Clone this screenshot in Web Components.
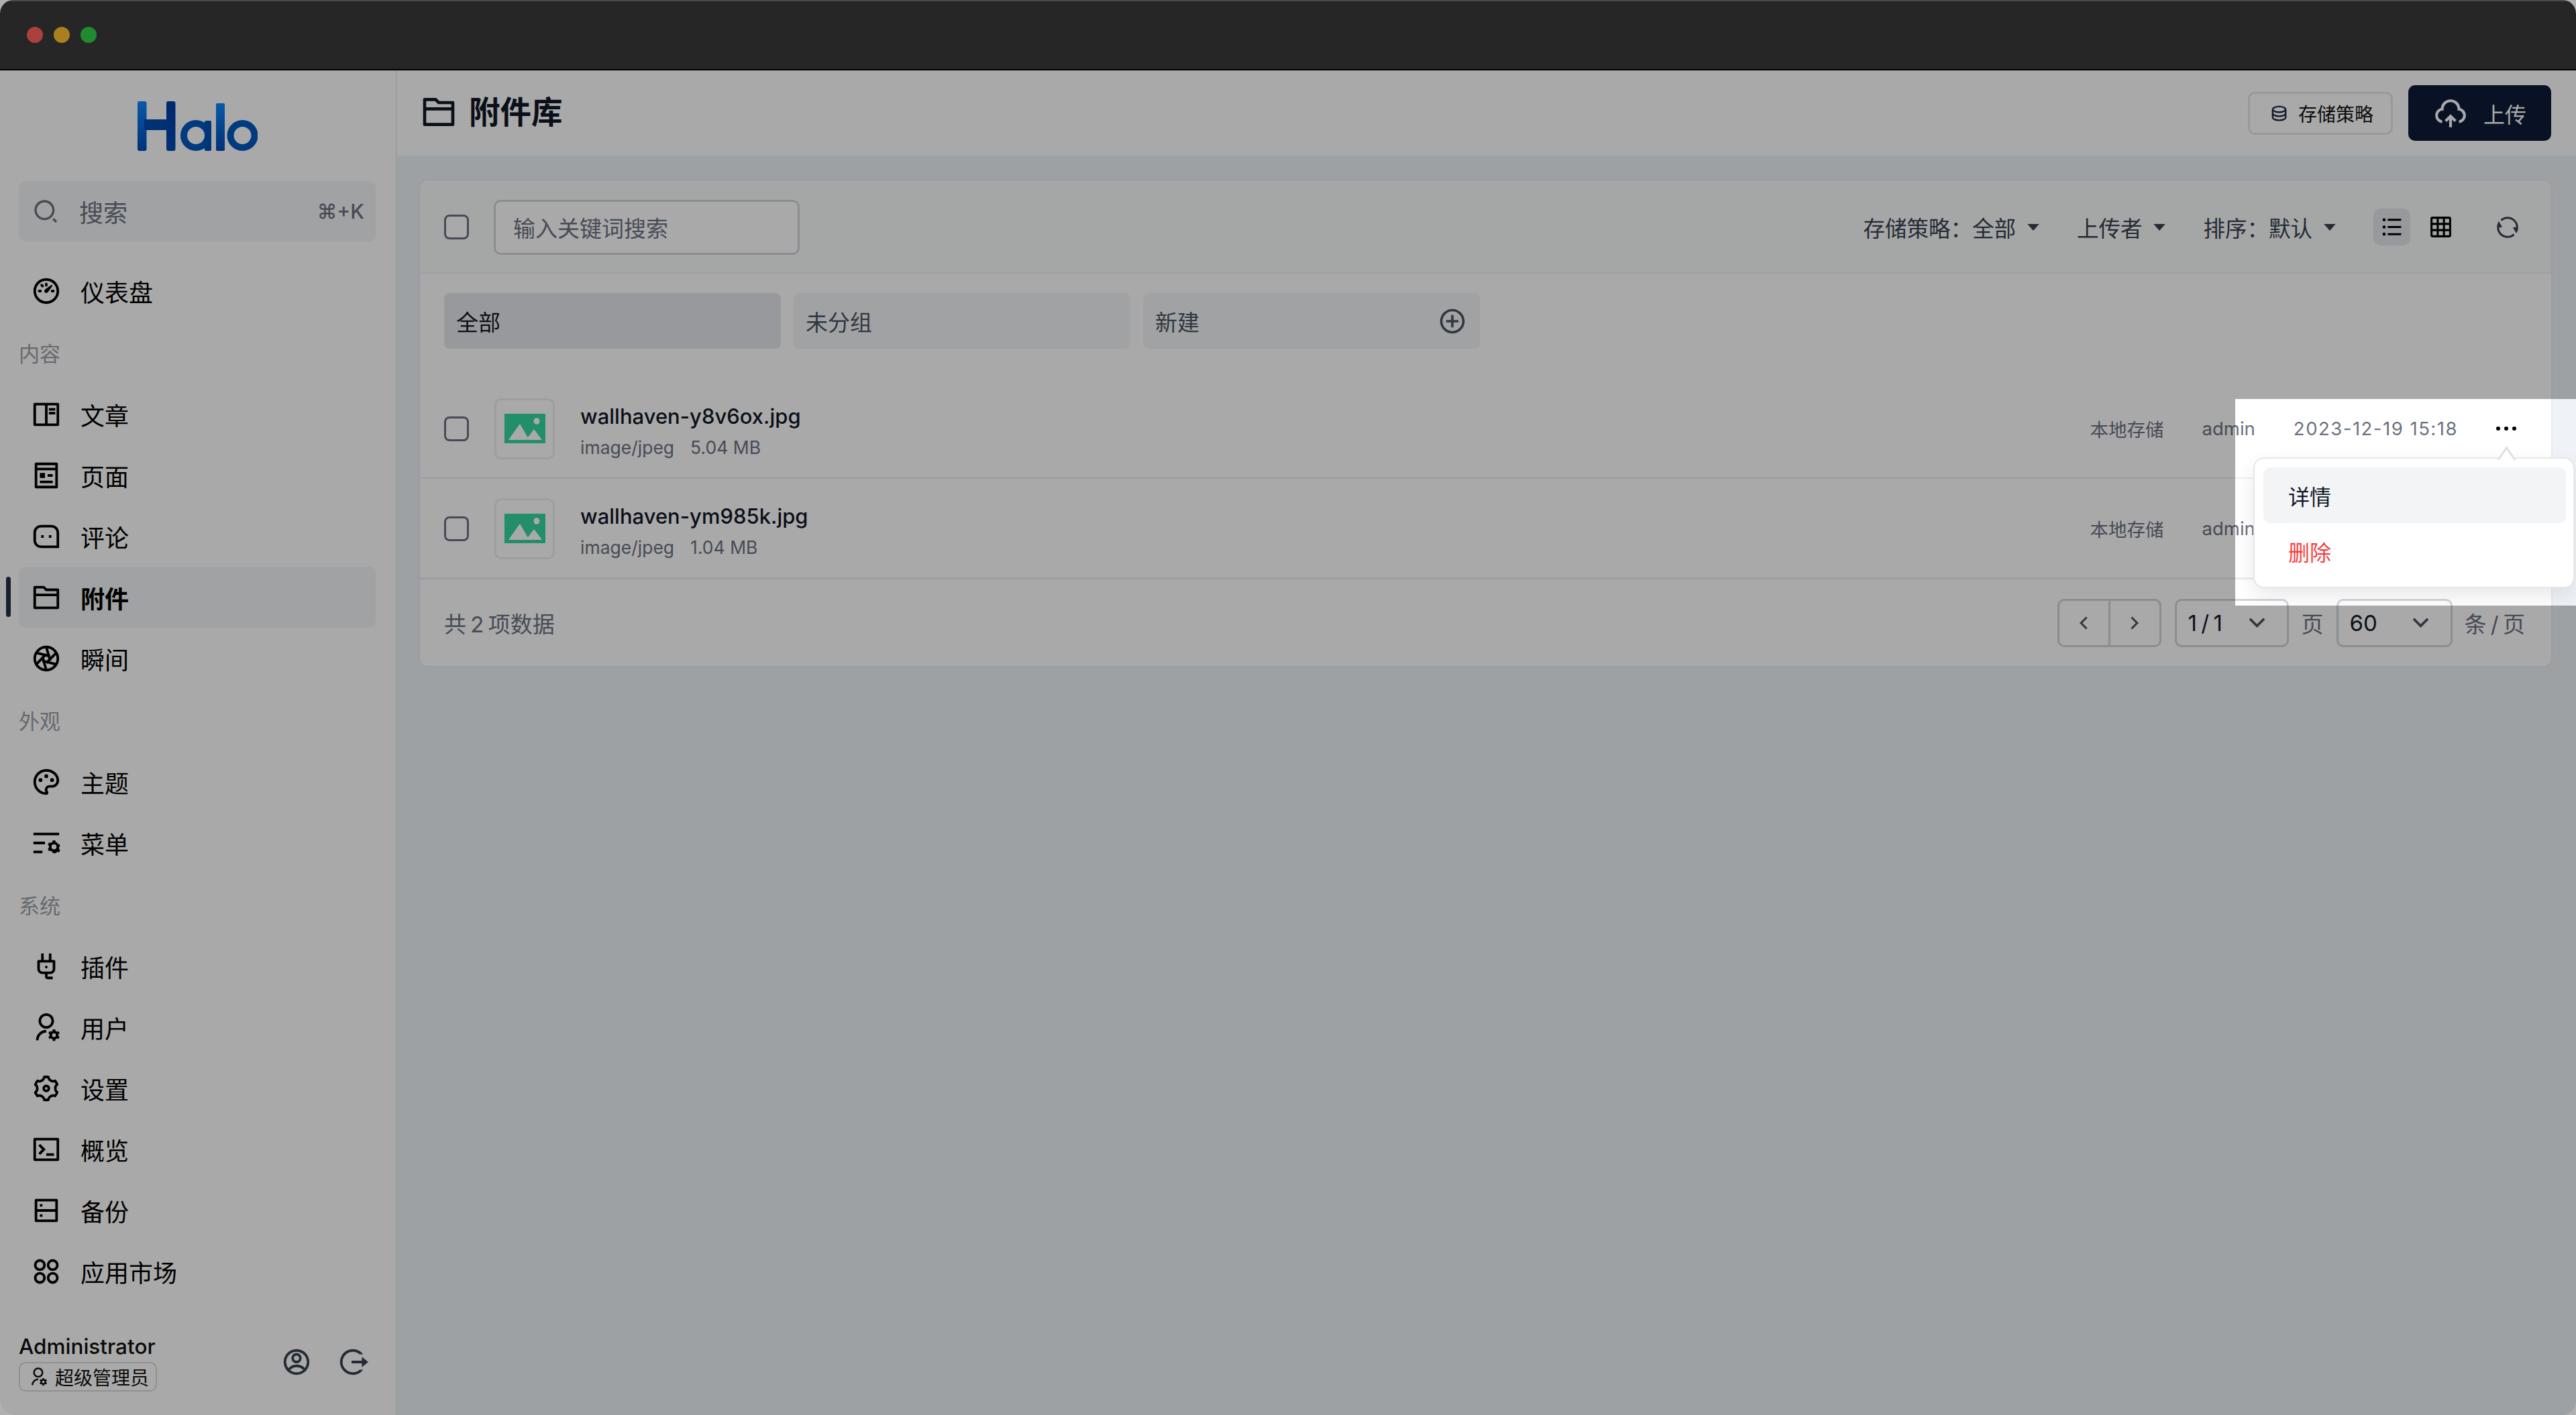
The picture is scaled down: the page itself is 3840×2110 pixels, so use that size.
<!DOCTYPE html>
<html lang="zh">
<head>
<meta charset="utf-8">
<title>附件库</title>
<style>
  html, body { margin: 0; width: 3840px; height: 2110px; overflow: hidden; background: #b0b0b0; }
  body { font-family: Inter, "Noto Sans CJK SC", sans-serif; }
</style>
</head>
<body>
<halo-app>
  <window-titlebar slot="top"></window-titlebar>
  <app-sidebar slot="side">
    <nav-item icon="dashboard">仪表盘</nav-item>
    <nav-title>内容</nav-title>
    <nav-item icon="book">文章</nav-item>
    <nav-item icon="pages">页面</nav-item>
    <nav-item icon="message">评论</nav-item>
    <nav-item icon="folder" active>附件</nav-item>
    <nav-item icon="lens">瞬间</nav-item>
    <nav-title>外观</nav-title>
    <nav-item icon="palette">主题</nav-item>
    <nav-item icon="listset">菜单</nav-item>
    <nav-title>系统</nav-title>
    <nav-item icon="plug">插件</nav-item>
    <nav-item icon="userset">用户</nav-item>
    <nav-item icon="settings">设置</nav-item>
    <nav-item icon="terminal">概览</nav-item>
    <nav-item icon="server">备份</nav-item>
    <nav-item icon="apps">应用市场</nav-item>
  </app-sidebar>
  <page-header slot="main"></page-header>
  <attachment-card slot="main">
    <card-toolbar slot="toolbar"></card-toolbar>
    <group-tabs slot="groups"></group-tabs>
    <attachment-row name="wallhaven-y8v6ox.jpg" size="5.04 MB" date="2023-12-19 15:18"></attachment-row>
    <attachment-row name="wallhaven-ym985k.jpg" size="1.04 MB" date="2023-12-19 15:18"></attachment-row>
    <card-pagination slot="footer"></card-pagination>
  </attachment-card>
  <spot-scrim slot="over"><action-menu></action-menu></spot-scrim>
</halo-app>

<script>
const ICONS = {
  dashboard: "M12 2c5.523 0 10 4.477 10 10s-4.477 10-10 10S2 17.523 2 12 6.477 2 12 2zm0 2a8 8 0 1 0 0 16 8 8 0 0 0 0-16zm3.833 3.337a.596.596 0 0 1 .763.067.59.59 0 0 1 .063.76c-2.18 3.046-3.38 4.678-3.598 4.897a1.5 1.5 0 0 1-2.122-2.122c.374-.373 2.005-1.574 4.894-3.602zM17.5 11a1 1 0 0 1 0 2h-1a1 1 0 0 1 0-2h1zm-10 0a1 1 0 0 1 0 2h-1a1 1 0 0 1 0-2h1zm2.318-3.596a1 1 0 0 1-1.414 1.414l-.707-.707a1 1 0 0 1 1.414-1.414l.707.707zM12 5.5a1 1 0 0 1 1 1v1a1 1 0 0 1-2 0v-1a1 1 0 0 1 1-1z",
  book: "M2 3.993A1 1 0 0 1 2.992 3h18.016c.548 0 .992.445.992.993v16.014a1 1 0 0 1-.992.993H2.992A.993.993 0 0 1 2 20.007V3.993zM11 5H4v14h7V5zm2 0v14h7V5h-7zm1 2h5v2h-5V7zm0 3h5v2h-5v-2z",
  pages: "M5 8v12h14V8H5zm0-2h14V4H5v2zm15 16H4a1 1 0 0 1-1-1V3a1 1 0 0 1 1-1h16a1 1 0 0 1 1 1v18a1 1 0 0 1-1 1zM7 10h4v4H7v-4zm0 6h10v2H7v-2zm6-5h4v2h-4v-2z",
  message: "M2 8.994A5.99 5.99 0 0 1 8 3h8c3.313 0 6 2.695 6 5.994V21H8c-3.313 0-6-2.695-6-5.994V8.994zM20 19V8.994A4.004 4.004 0 0 0 16 5H8a3.99 3.99 0 0 0-4 3.994v6.012A4.004 4.004 0 0 0 8 19h12zm-6-8h2v2h-2v-2zm-6 0h2v2H8v-2z",
  folder: "M12.414 5H21a1 1 0 0 1 1 1v14a1 1 0 0 1-1 1H3a1 1 0 0 1-1-1V4a1 1 0 0 1 1-1h7.414l2 2zM20 11H4v8h16v-8zm0-2V7h-8.414l-2-2H4v4h16z",
  palette: "M12 2c5.522 0 10 3.978 10 8.889a5.558 5.558 0 0 1-5.556 5.555h-1.966c-.922 0-1.667.745-1.667 1.667 0 .422.167.811.422 1.1.267.3.434.689.434 1.122C13.667 21.256 12.9 22 12 22 6.478 22 2 17.522 2 12S6.478 2 12 2zm-1.189 16.111a3.664 3.664 0 0 1 3.667-3.667h1.966A3.558 3.558 0 0 0 20 10.89C20 7.139 16.468 4 12 4a8 8 0 0 0-.676 15.972 3.648 3.648 0 0 1-.513-1.86zM7.5 12a1.5 1.5 0 1 1 0-3 1.5 1.5 0 0 1 0 3zm9 0a1.5 1.5 0 1 1 0-3 1.5 1.5 0 0 1 0 3zM12 9a1.5 1.5 0 1 1 0-3 1.5 1.5 0 0 1 0 3z",
  listset: "M2 18h7v2H2v-2zm0-7h9v2H2v-2zm0-7h20v2H2V4zm18.674 9.025l1.156-.391 1 1.732-.916.805a4.017 4.017 0 0 1 0 1.658l.916.805-1 1.732-1.156-.391c-.41.37-.898.655-1.435.83L19 20h-2l-.24-1.196a3.996 3.996 0 0 1-1.434-.83l-1.156.392-1-1.732.916-.805a4.017 4.017 0 0 1 0-1.658l-.916-.805 1-1.732 1.156.391c.41-.37.898-.655 1.435-.83L17 10h2l.24 1.196c.536.174 1.024.46 1.434.83zM18 17a2 2 0 1 0 0-4 2 2 0 0 0 0 4z",
  plug: "M13 18v2h4v2h-4a2 2 0 0 1-2-2v-2H9a4 4 0 0 1-4-4V8a1 1 0 0 1 1-1h2V2h2v5h4V2h2v5h2a1 1 0 0 1 1 1v6a4 4 0 0 1-4 4h-2zm-4-2h6a2 2 0 0 0 2-2v-3H7v3a2 2 0 0 0 2 2zm8-7V9H7v2h10zm-5 4.5a1 1 0 1 1 0-2 1 1 0 0 1 0 2z",
  userset: "M12 14v2a6 6 0 0 0-6 6H4a8 8 0 0 1 8-8zm0-1c-3.315 0-6-2.685-6-6s2.685-6 6-6 6 2.685 6 6-2.685 6-6 6zm0-2c2.21 0 4-1.79 4-4s-1.79-4-4-4-4 1.79-4 4 1.79 4 4 4zm2.595 7.812a3.51 3.51 0 0 1 0-1.623l-.992-.573 1-1.732.992.573A3.496 3.496 0 0 1 17 14.645V13.5h2v1.145c.532.158 1.012.44 1.405.812l.992-.573 1 1.732-.992.573a3.51 3.51 0 0 1 0 1.622l.992.573-1 1.732-.992-.573a3.496 3.496 0 0 1-1.405.812V22.5h-2v-1.145a3.496 3.496 0 0 1-1.405-.812l-.992.573-1-1.732.992-.572zM18 19.5a1.5 1.5 0 1 0 0-3 1.5 1.5 0 0 0 0 3z",
  settings: "M3.34 17a10.018 10.018 0 0 1-.978-2.326 3 3 0 0 0 .002-5.347A9.99 9.99 0 0 1 4.865 4.99a3 3 0 0 0 4.631-2.674 9.99 9.99 0 0 1 5.007.002 3 3 0 0 0 4.632 2.672c.579.59 1.093 1.261 1.525 2.01.433.749.757 1.53.978 2.326a3 3 0 0 0-.002 5.347 9.99 9.99 0 0 1-2.501 4.337 3 3 0 0 0-4.631 2.674 9.99 9.99 0 0 1-5.007-.002 3 3 0 0 0-4.632-2.672A10.018 10.018 0 0 1 3.34 17zm5.66.196a4.993 4.993 0 0 1 2.25 2.77c.499.047 1 .048 1.499.001A4.993 4.993 0 0 1 15 17.197a4.993 4.993 0 0 1 3.525-.565c.29-.408.54-.843.748-1.298A4.993 4.993 0 0 1 18 12c0-1.26.47-2.437 1.273-3.334a8.126 8.126 0 0 0-.75-1.298A4.993 4.993 0 0 1 15 6.804a4.993 4.993 0 0 1-2.25-2.77c-.499-.047-1-.048-1.499-.001A4.993 4.993 0 0 1 9 6.803a4.993 4.993 0 0 1-3.525.565 7.99 7.99 0 0 0-.748 1.298A4.993 4.993 0 0 1 6 12c0 1.26-.47 2.437-1.273 3.334a8.126 8.126 0 0 0 .75 1.298A4.993 4.993 0 0 1 9 17.196zM12 15a3 3 0 1 1 0-6 3 3 0 0 1 0 6zm0-2a1 1 0 1 0 0-2 1 1 0 0 0 0 2z",
  terminal: "M3 3h18a1 1 0 0 1 1 1v16a1 1 0 0 1-1 1H3a1 1 0 0 1-1-1V4a1 1 0 0 1 1-1zm1 2v14h16V5H4zm8 10h6v2h-6v-2zm-3.333-3L5.838 9.172l1.415-1.415L11.495 12l-4.242 4.243-1.415-1.415L8.667 12z",
  server: "M5 11h14V5H5v6zm16-7v16a1 1 0 0 1-1 1H4a1 1 0 0 1-1-1V4a1 1 0 0 1 1-1h16a1 1 0 0 1 1 1zm-2 9H5v6h14v-6zM7 15h2v2H7v-2zm0-8h2v2H7V7z",
  search: "M11 2c4.968 0 9 4.032 9 9s-4.032 9-9 9-9-4.032-9-9 4.032-9 9-9zm0 16c3.867 0 7-3.133 7-7 0-3.868-3.133-7-7-7-3.868 0-7 3.132-7 7 0 3.867 3.132 7 7 7zm8.485.071l2.829 2.828-1.415 1.415-2.828-2.829 1.414-1.414z",
  add: "M11 11V7h2v4h4v2h-4v4h-2v-4H7v-2h4zm1 11C6.477 22 2 17.523 2 12S6.477 2 12 2s10 4.477 10 10-4.477 10-10 10zm0-2a8 8 0 1 0 0-16 8 8 0 0 0 0 16z",
  account: "M12 22C6.477 22 2 17.523 2 12S6.477 2 12 2s10 4.477 10 10-4.477 10-10 10zm-4.987-3.744A7.966 7.966 0 0 0 12 20c1.97 0 3.773-.712 5.167-1.892A6.979 6.979 0 0 0 12.16 16a6.981 6.981 0 0 0-5.147 2.256zM5.616 16.82A8.975 8.975 0 0 1 12.16 14a8.972 8.972 0 0 1 6.362 2.634 8 8 0 1 0-12.906.187zM12 13a4 4 0 1 1 0-8 4 4 0 0 1 0 8zm0-2a2 2 0 1 0 0-4 2 2 0 0 0 0 4z",
  logout: "M12 22C6.477 22 2 17.523 2 12S6.477 2 12 2c3.27 0 6.175 1.57 8 4h-2.709a8 8 0 1 0 .001 12h2.71A9.985 9.985 0 0 1 12 22zm7-6v-3h-8v-2h8V8l5 4-5 4z",
  database: "M5 12.5c0 .313.461.858 1.53 1.393C7.914 14.585 9.877 15 12 15c2.123 0 4.086-.415 5.47-1.107 1.069-.535 1.53-1.08 1.53-1.393v-2.171C17.35 11.349 14.827 12 12 12s-5.35-.652-7-1.671V12.5zm14 2.829C17.35 16.349 14.827 17 12 17s-5.35-.652-7-1.671V17.5c0 .313.461.858 1.53 1.393C7.914 19.585 9.877 20 12 20c2.123 0 4.086-.415 5.47-1.107 1.069-.535 1.53-1.08 1.53-1.393v-2.171zM3 17.5v-10C3 5.015 7.03 3 12 3s9 2.015 9 4.5v10c0 2.485-4.03 4.5-9 4.5s-9-2.015-9-4.5zm9-7.5c2.123 0 4.086-.415 5.47-1.107C18.539 8.358 19 7.813 19 7.5c0-.313-.461-.858-1.53-1.393C16.086 5.415 14.123 5 12 5c-2.123 0-4.086.415-5.47 1.107C5.461 6.642 5 7.187 5 7.5c0 .313.461.858 1.53 1.393C7.914 9.585 9.877 10 12 10z",
  upload: "M12 12.586l4.243 4.242-1.415 1.415L13 16.415V22h-2v-5.587l-1.828 1.83-1.415-1.415L12 12.586zM12 2a7.001 7.001 0 0 1 6.954 6.194A5.5 5.5 0 0 1 18 18.978v-2.014a3.5 3.5 0 1 0-1.112-6.91 5 5 0 1 0-9.777 0 3.5 3.5 0 0 0-1.292 6.88l.181.03v2.014a5.5 5.5 0 0 1-.954-10.784A7 7 0 0 1 12 2z",
  list: "M8 4h13v2H8V4zM4.5 6.5a1.5 1.5 0 1 1 0-3 1.5 1.5 0 0 1 0 3zm0 7a1.5 1.5 0 1 1 0-3 1.5 1.5 0 0 1 0 3zm0 6.9a1.5 1.5 0 1 1 0-3 1.5 1.5 0 0 1 0 3zM8 11h13v2H8v-2zm0 7h13v2H8v-2z",
  refresh: "M5.463 4.433A9.961 9.961 0 0 1 12 2c5.523 0 10 4.477 10 10 0 2.136-.67 4.116-1.81 5.74L17 12h3A8 8 0 0 0 6.46 6.228l-.997-1.795zm13.074 15.134A9.961 9.961 0 0 1 12 22C6.477 22 2 17.523 2 12c0-2.136.67-4.116 1.81-5.74L7 12H4a8 8 0 0 0 13.54 5.772l.997 1.795z",
  left: "M10.828 12l4.95 4.95-1.414 1.414L8 12l6.364-6.364 1.414 1.414z",
  right: "M13.172 12l-4.95-4.95 1.414-1.414L16 12l-6.364 6.364-1.414-1.414z",
  down: "M12 13.172l4.95-4.95 1.414 1.414L12 16 5.636 9.636 7.05 8.222z",
  caret: "M12 16L5 8h14z"
};

// icons that read better as strokes
const STROKED = {
  lens: `<circle cx="12" cy="12" r="9" /><path d="M12 3l3.03 10.75M19.79 7.5L12 15.5M19.79 16.5L8.97 13.75M12 21L8.97 10.25M4.21 16.5L12 8.5M4.21 7.5l10.82 2.75" />`,
  apps: `<circle cx="7" cy="7" r="3.6"/><circle cx="17" cy="7" r="3.6"/><circle cx="7" cy="17" r="3.6"/><circle cx="17" cy="17" r="3.6"/>`,
  table: `<rect x="3" y="3" width="18" height="18" rx="1"/><path d="M9 3v18M15 3v18M3 9h18M3 15h18"/>`
};

class AppIcon extends HTMLElement {
  connectedCallback() {
    const name = this.getAttribute("name");
    const size = this.getAttribute("size") || 46;
    const body = STROKED[name]
      ? `<g fill="none" stroke="currentColor" stroke-width="2">${STROKED[name]}</g>`
      : `<path fill="currentColor" d="${ICONS[name]}" />`;
    this.attachShadow({ mode: "open" }).innerHTML = `
      <style>:host { display: inline-flex; flex: none; } svg { display: block; }</style>
      <svg width="${size}" height="${size}" viewBox="0 0 24 24">${body}</svg>`;
  }
}

class HaloApp extends HTMLElement {
  constructor() {
    super();
    this.attachShadow({ mode: "open" }).innerHTML = `
      <style>
        :host { display: flex; flex-direction: column; position: relative; width: 3840px; height: 2110px;
                border-radius: 20px; overflow: hidden; background: #eff3f7; color: #000; }
        .body { flex: 1; display: flex; min-height: 0; }
        .main { flex: 1; display: flex; flex-direction: column; min-width: 0; }
      </style>
      <slot name="top"></slot>
      <div class="body">
        <slot name="side"></slot>
        <div class="main"><slot name="main"></slot></div>
      </div>
      <slot name="over"></slot>`;
  }
}

class WindowTitlebar extends HTMLElement {
  constructor() {
    super();
    this.attachShadow({ mode: "open" }).innerHTML = `
      <style>
        :host { display: flex; align-items: center; gap: 16px; height: 105px; box-sizing: border-box; padding: 0 0 2px 40px;
                background: #262626; border-top: 2px solid #4a4a4a; border-bottom: 2px solid #000; }
        i { width: 24px; height: 24px; border-radius: 50%; }
      </style>
      <i style="background:#ab413d"></i><i style="background:#ab7f20"></i><i style="background:#1f8a30"></i>`;
  }
}

class AppSidebar extends HTMLElement {
  constructor() {
    super();
    this.attachShadow({ mode: "open" }).innerHTML = `
      <style>
        :host { display: flex; flex-direction: column; flex: none; width: 592px; box-sizing: border-box;
                padding: 0 29px 35px 28px; background: #fff; border-right: 3px solid #f0f1f3; font-size: 36px; }
        .logo { height: 165px; flex: none; display: flex; align-items: center; justify-content: center; }
        .search { height: 90px; flex: none; display: flex; align-items: center; box-sizing: border-box; padding: 0 17px 0 20px;
                  background: #f3f4f6; border-radius: 10px; color: #6b7280; margin-bottom: 28px; }
        .search span { margin-left: 30px; flex: 1; }
        .search kbd { font: 500 30px Inter, sans-serif; color: #6b7280; }
        .user { margin-top: auto; display: flex; align-items: center; }
        .who { flex: 1; display: flex; flex-direction: column; align-items: flex-start; gap: 1px; }
        .name { font-size: 31.5px; font-weight: 500; line-height: 44px; color: #111; }
        .badge { display: flex; align-items: center; gap: 10px; height: 44px; box-sizing: border-box; padding: 0 10px 0 12px;
                 border: 2px solid #d8d9dc; border-radius: 10px; font-size: 28px; color: #111; }
        .ops { display: flex; gap: 38px; color: #374151; margin-right: 11px; }
      </style>
      <div class="logo">
        <svg width="179" height="74" viewBox="0 0 179 74" role="img" aria-label="Halo">
          <defs><linearGradient id="g" x1="0" y1="0" x2="0" y2="1"><stop offset="0" stop-color="#0f88ff"/><stop offset="1" stop-color="#004bb5"/></linearGradient>
          <linearGradient id="h" x1="0" y1="0" x2="0" y2="1"><stop offset="0" stop-color="#003ca8"/><stop offset="1" stop-color="#004bb5"/></linearGradient>
          <linearGradient id="r" gradientUnits="userSpaceOnUse" x1="0" y1="0" x2="0" y2="74"><stop offset="0" stop-color="#0f88ff"/><stop offset="1" stop-color="#004bb5"/></linearGradient></defs>
          <rect x="0" y="0" width="13.5" height="74" rx="3" fill="url(#g)"/>
          <rect x="43" y="0" width="13.5" height="74" rx="3" fill="url(#h)"/>
          <rect x="10" y="27" width="36" height="16" fill="#004aae"/>
          <circle cx="87" cy="51" r="18" fill="none" stroke="#0058c0" stroke-width="10"/>
          <rect x="100" y="29" width="10" height="45" rx="2" fill="#0050b5"/>
          <rect x="117" y="3" width="13" height="71" rx="2" fill="url(#r)"/>
          <circle cx="156.5" cy="51" r="18" fill="none" stroke="#0058c0" stroke-width="10"/>
        </svg>
      </div>
      <div class="search"><app-icon name="search" size="40"></app-icon><span>搜索</span><kbd>⌘+K</kbd></div>
      <slot></slot>
      <div class="user">
        <div class="who">
          <div class="name">Administrator</div>
          <div class="badge"><app-icon name="userset" size="30"></app-icon>超级管理员</div>
        </div>
        <div class="ops"><app-icon name="account" size="46"></app-icon><app-icon name="logout" size="46"></app-icon></div>
      </div>`;
  }
}

class NavTitle extends HTMLElement {
  constructor() {
    super();
    this.attachShadow({ mode: "open" }).innerHTML = `
      <style>:host { display: flex; align-items: center; height: 93px; font-size: 31px; color: #9c9fa6; }</style><slot></slot>`;
  }
}

class NavItem extends HTMLElement {
  connectedCallback() {
    this.attachShadow({ mode: "open" }).innerHTML = `
      <style>
        :host { display: flex; align-items: center; gap: 28px; position: relative; height: 91px; padding-left: 18px;
                font-size: 36px; color: #000; border-radius: 10px; }
        :host([active]) { background: #f3f4f6; font-weight: 600; }
        :host([active])::before { content: ""; position: absolute; left: -19px; top: 15px; width: 7px; height: 60px;
                background: #243147; border-radius: 4px; }
      </style>
      <app-icon name="${this.getAttribute("icon")}"></app-icon><slot></slot>`;
  }
}

class PageHeader extends HTMLElement {
  constructor() {
    super();
    this.attachShadow({ mode: "open" }).innerHTML = `
      <style>
        :host { display: flex; align-items: center; flex: none; height: 127px; box-sizing: border-box; padding: 0 37px 0 34px;
                background: #fff; color: #111827; }
        h1 { margin: 0 0 3px 17px; font-size: 46.5px; font-weight: 700; line-height: 1; }
        .folder { margin-bottom: 3px; }
        .acts { margin-left: auto; display: flex; align-items: center; gap: 23px; }
        .plain { display: flex; align-items: center; gap: 14px; height: 64px; width: 216px; box-sizing: border-box; padding-left: 29px;
                 border: 3px solid #e5e7eb; border-radius: 10px; font-size: 28px; color: #111; }
        .main { display: flex; align-items: center; gap: 24px; height: 83px; width: 213px; box-sizing: border-box; padding-left: 38px;
                background: #0f1a39; border-radius: 10px; font-size: 32px; color: #fff; }
      </style>
      <app-icon class="folder" name="folder" size="56"></app-icon><h1>附件库</h1>
      <div class="acts">
        <div class="plain"><app-icon name="database" size="29" style="color:#1f2a44"></app-icon>存储策略</div>
        <div class="main"><app-icon name="upload" size="50"></app-icon>上传</div>
      </div>`;
  }
}

class AttachmentCard extends HTMLElement {
  constructor() {
    super();
    this.attachShadow({ mode: "open" }).innerHTML = `
      <style>
        :host { display: block; margin: 37px 37px 0 34px; background: #fff; border-radius: 12px;
                box-shadow: 0 0 0 2px #e8ebf0; overflow: hidden; }
        .rows { display: block; }
      </style>
      <slot name="toolbar"></slot>
      <slot name="groups"></slot>
      <div class="rows"><slot></slot></div>
      <slot name="footer"></slot>`;
  }
}

class CheckBox extends HTMLElement {
  constructor() {
    super();
    this.attachShadow({ mode: "open" }).innerHTML = `
      <style>:host { display: block; flex: none; width: 37px; height: 37px; box-sizing: border-box;
                     border: 3px solid #6b7280; border-radius: 8px; background: #fff; }</style>`;
  }
}

class FilterDrop extends HTMLElement {
  constructor() {
    super();
    this.attachShadow({ mode: "open" }).innerHTML = `
      <style>:host { display: flex; align-items: center; gap: 11px; font-size: 32.5px; color: #374151; white-space: pre; }</style>
      <slot></slot><app-icon name="caret" size="30"></app-icon>`;
  }
}

class CardToolbar extends HTMLElement {
  constructor() {
    super();
    this.attachShadow({ mode: "open" }).innerHTML = `
      <style>
        :host { display: flex; align-items: center; height: 139px; box-sizing: border-box; padding: 2px 46px 0 36px;
                background: #f9fafb; border-bottom: 2px solid #f0f1f4; }
        .input { margin-left: 37px; width: 456px; height: 82px; box-sizing: border-box; padding-left: 26px; display: flex; align-items: center;
                 background: #fff; border: 3px solid #d1d5db; border-radius: 10px; font-size: 33px; color: #6b7280; }
        .right { margin-left: auto; display: flex; align-items: center; gap: 50px; }
        .view { display: flex; align-items: center; gap: 18px; color: #000; }
        .view span { width: 55px; height: 55px; display: flex; align-items: center; justify-content: center; border-radius: 10px; }
        .view .on { background: #e5e7eb; }
        .refresh { margin-left: 3px; color: #374151; }
      </style>
      <check-box></check-box>
      <div class="input">输入关键词搜索</div>
      <div class="right">
        <filter-drop>存储策略：全部</filter-drop>
        <filter-drop>上传者</filter-drop>
        <filter-drop>排序：默认</filter-drop>
        <div class="view">
          <span class="on"><app-icon name="list" size="37"></app-icon></span>
          <span><app-icon name="table" size="37"></app-icon></span>
        </div>
        <app-icon class="refresh" name="refresh" size="38"></app-icon>
      </div>`;
  }
}

class GroupTabs extends HTMLElement {
  constructor() {
    super();
    this.attachShadow({ mode: "open" }).innerHTML = `
      <style>
        :host { display: flex; gap: 19px; padding: 29px 36px 45px; }
        div { flex: none; width: 502px; height: 83px; box-sizing: border-box; padding: 0 19px 0 18px; display: flex; align-items: center;
              justify-content: space-between; background: #f3f4f6; border-radius: 8px; font-size: 33px; color: #4b5563; }
        div.on { background: #e5e7eb; color: #111827; }
      </style>
      <div class="on">全部</div><div>未分组</div><div>新建<app-icon name="add" size="44"></app-icon></div>`;
  }
}

class AttachmentRow extends HTMLElement {
  connectedCallback() {
    this.attachShadow({ mode: "open" }).innerHTML = `
      <style>
        :host { display: flex; align-items: center; height: 149px; box-sizing: border-box; padding: 1px 52px 0 36px;
                background: #fff; border-bottom: 2px solid #eceef2; color: #6b7280; font-size: 27.5px; }
        .thumb { margin-left: 38px; width: 90px; height: 91px; box-sizing: border-box; display: flex; align-items: center; justify-content: center;
                 border: 3px solid #eceef2; border-radius: 10px; }
        .text { margin: 6px 0 0 38px; display: flex; flex-direction: column; gap: 10px; }
        .name { font-size: 31px; font-weight: 500; line-height: 40px; color: #111827; }
        .meta { display: flex; gap: 24px; font-size: 26.5px; line-height: 32px; color: #6b7280; }
        .cols { margin-left: auto; display: flex; align-items: center; gap: 57px; }
        .date { letter-spacing: 1.5px; }
      </style>
      <check-box></check-box>
      <div class="thumb">
        <svg width="61" height="44" viewBox="0 0 61 44">
          <rect width="61" height="44" fill="#36d7a0"/>
          <path fill="#fff" d="M23 15L37 39H6zM44 23l12 16H32z"/><ellipse cx="48" cy="11" rx="4.5" ry="5" fill="#fff"/>
        </svg>
      </div>
      <div class="text">
        <div class="name">${this.getAttribute("name")}</div>
        <div class="meta"><span>image/jpeg</span><span>${this.getAttribute("size")}</span></div>
      </div>
      <div class="cols">
        <span>本地存储</span><span>admin</span><span class="date">${this.getAttribute("date")}</span>
        <svg width="30" height="8" viewBox="0 0 30 8"><circle cx="3" cy="4" r="3"/><circle cx="15" cy="4" r="3"/><circle cx="27" cy="4" r="3"/></svg>
      </div>`;
  }
}

class CardPagination extends HTMLElement {
  constructor() {
    super();
    this.attachShadow({ mode: "open" }).innerHTML = `
      <style>
        :host { display: flex; align-items: center; height: 130px; box-sizing: border-box; padding: 0 39px 0 36px;
                background: #fff; font-size: 33px; color: #6b7280; border-top: 1px solid #e5e7eb; word-spacing: -3px; }
        .nav { margin-left: auto; display: flex; width: 155px; height: 72px; box-sizing: border-box; border: 3px solid #d1d5db; border-radius: 10px; color: #4b5563; }
        .nav span { flex: 1; display: flex; align-items: center; justify-content: center; }
        .nav span + span { border-left: 3px solid #d1d5db; }
        .sel { display: flex; align-items: center; justify-content: space-between; height: 72px; box-sizing: border-box; padding: 0 22px 0 17px;
               border: 3px solid #d1d5db; border-radius: 10px; color: #111827; }
        .sel app-icon { color: #4b5563; }
      </style>
      <span>共 2 项数据</span>
      <div class="nav"><span><app-icon name="left" size="36"></app-icon></span><span><app-icon name="right" size="36"></app-icon></span></div>
      <div class="sel" style="width:170px;margin-left:20px">1 / 1<app-icon name="down" size="45"></app-icon></div>
      <span style="margin:0 19px">页</span>
      <div class="sel" style="width:173px">60<app-icon name="down" size="45"></app-icon></div>
      <span style="margin-left:18px">条 / 页</span>`;
  }
}

class SpotScrim extends HTMLElement {
  constructor() {
    super();
    this.attachShadow({ mode: "open" }).innerHTML = `
      <style>
        :host { display: block; position: absolute; left: 0; right: 0; top: 105px; bottom: 0; overflow: hidden; pointer-events: none; }
        .hole { position: absolute; left: 3332px; top: 490px; width: 508px; height: 308px; overflow: hidden;
                box-shadow: 0 0 0 4000px rgba(0, 0, 0, .337); }
      </style>
      <div class="hole"><slot></slot></div>`;
  }
}

class ActionMenu extends HTMLElement {
  constructor() {
    super();
    this.attachShadow({ mode: "open" }).innerHTML = `
      <style>
        :host { display: block; position: absolute; left: 27px; top: 87px; width: 479px; height: 195px; box-sizing: border-box;
                padding: 13px 11px 12px 13px; background: #fff; border: 2px solid #e5e7eb; border-radius: 16px;
                box-shadow: 0 12px 30px rgba(0, 0, 0, .09); font-size: 32px; }
        :host::before { content: ""; position: absolute; right: 88px; top: -11px; width: 20px; height: 20px; background: #fff;
                border-left: 3px solid #dedfe3; border-top: 3px solid #dedfe3; transform: rotate(45deg) skew(10deg, 10deg); }
        div { height: 83px; display: flex; align-items: center; padding-left: 37px; border-radius: 10px; color: #111827; position: relative; }
        .on { background: #f3f4f6; }
        .bad { color: #f73e3e; }
      </style>
      <div class="on">详情</div><div class="bad">删除</div>`;
  }
}

customElements.define("app-icon", AppIcon);
customElements.define("halo-app", HaloApp);
customElements.define("window-titlebar", WindowTitlebar);
customElements.define("app-sidebar", AppSidebar);
customElements.define("nav-title", NavTitle);
customElements.define("nav-item", NavItem);
customElements.define("page-header", PageHeader);
customElements.define("attachment-card", AttachmentCard);
customElements.define("check-box", CheckBox);
customElements.define("filter-drop", FilterDrop);
customElements.define("card-toolbar", CardToolbar);
customElements.define("group-tabs", GroupTabs);
customElements.define("attachment-row", AttachmentRow);
customElements.define("card-pagination", CardPagination);
customElements.define("spot-scrim", SpotScrim);
customElements.define("action-menu", ActionMenu);
</script>
</body>
</html>
